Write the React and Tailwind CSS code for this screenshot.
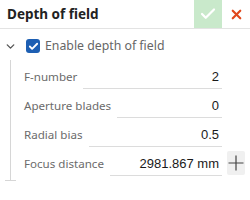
import { Check, X, ChevronDown } from 'lucide-react';

const fields = [
  { label: 'F-number', value: '2' },
  { label: 'Aperture blades', value: '0' },
  { label: 'Radial bias', value: '0.5' },
  { label: 'Focus distance', value: '2981.867 mm', plus: true },
];

function FieldRow({ label, value, plus }) {
  return (
    <div className="flex items-end h-[29px]">
      <div className="flex items-end w-[198px]">
        <span className="text-[11.6px] text-[#6b6b6b] leading-[20px] pb-[2px] pr-[6px] whitespace-nowrap">{label}</span>
        <div className="flex-1 border-b border-[#dcdcdc] text-right font-['Liberation_Sans',sans-serif] text-[13px] text-[#1a1a1a] leading-[20px] pb-[1px] pr-[3px] whitespace-nowrap">
          {value}
        </div>
      </div>
      {plus && (
        <button className="ml-[5px] mb-[1px] w-[18px] h-[24px] bg-[#f0f0f0] rounded-[2px] flex items-center justify-center">
          <svg width="16" height="16" viewBox="0 0 16 16" className="shrink-0">
            <path d="M8 0.5V15.5M0.5 8H15.5" stroke="#444" strokeWidth="1.2" />
          </svg>
        </button>
      )}
    </div>
  );
}

export default function App() {
  return (
    <div className="w-[250px] h-[200px] bg-white font-['Noto_Sans',sans-serif] overflow-hidden">
      <div className="flex items-stretch h-[29px] border-b border-[#e3e3e3]">
        <div className="flex-1 pl-[7px] flex items-center text-[13.5px] font-bold text-[#222]">Depth of field</div>
        <div className="w-[28px] bg-[#c9e9cb] flex items-center justify-center text-white">
          <Check className="w-[18px] h-[18px]" strokeWidth={3} />
        </div>
        <div className="w-[28px] flex items-center justify-center text-[#e0481c]">
          <X className="w-[15px] h-[15px]" strokeWidth={3.5} />
        </div>
      </div>

      <div className="flex items-center h-[31px] pt-[3px]">
        <ChevronDown className="ml-[4px] w-[13px] h-[13px] text-[#555]" strokeWidth={2.5} />
        <div className="ml-[9px] w-[14px] h-[14px] rounded-[3px] bg-[#1d5fb3] flex items-center justify-center text-white">
          <Check className="w-[11px] h-[11px]" strokeWidth={4} />
        </div>
        <span className="ml-[5px] text-[12.3px] text-[#666]">Enable depth of field</span>
      </div>

      <div className="relative ml-[10px] border-l border-[#d6d6d6] pl-[13px] pb-[5px]">
        {fields.map((f) => (
          <FieldRow key={f.label} {...f} />
        ))}
        <div className="absolute left-[-6px] bottom-0 w-[11px] border-b border-[#d6d6d6]" />
      </div>
    </div>
  );
}
